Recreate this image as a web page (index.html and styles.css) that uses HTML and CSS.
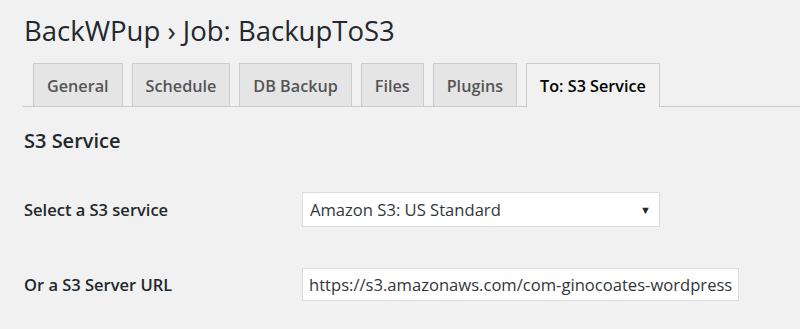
FILE: index.html
```html
<!DOCTYPE html>
<html lang="en">
<head>
  <meta charset="UTF-8">
  <title>BackWPup › Job: BackupToS3</title>
  <link rel="stylesheet" href="styles.css">
</head>
<body>
  <div class="wrap">
    <h1>BackWPup › Job: BackupToS3</h1>

    <nav class="nav-tabs">
      <a class="nav-tab" href="#">General</a>
      <a class="nav-tab" href="#">Schedule</a>
      <a class="nav-tab" href="#">DB Backup</a>
      <a class="nav-tab" href="#">Files</a>
      <a class="nav-tab" href="#">Plugins</a>
      <a class="nav-tab nav-tab-active" href="#">To: S3 Service</a>
    </nav>

    <h3 class="section-title">S3 Service</h3>

    <div class="form-table">
      <div class="form-row">
        <label class="form-label" for="s3region">Select a S3 service</label>
        <div class="select-box" id="s3region">
          <span>Amazon S3: US Standard</span>
          <span class="select-arrow">▼</span>
        </div>
      </div>
      <div class="form-row">
        <label class="form-label" for="s3base_url">Or a S3 Server URL</label>
        <input type="text" id="s3base_url" class="text-input" value="https://s3.amazonaws.com/com-ginocoates-wordpress">
      </div>
    </div>
  </div>
</body>
</html>
```

FILE: styles.css
```css
:root {
  --bg-color: #f1f1f1;
  --text-color: #23282d;
  --tab-bg: #e5e5e5;
  --tab-text: #555;
  --border-color: #ccc;
  --input-border: #ddd;
}

body {
  font-family: 'Open Sans', 'Noto Sans', sans-serif;
  background-color: var(--bg-color);
  color: var(--text-color);
  margin: 0;
}

.wrap {
  padding: 13px 0 0 23px;
}

h1 {
  font-size: 27.5px;
  font-weight: 400;
  line-height: 36px;
  margin: 0 0 14px 1px;
}

.nav-tabs {
  display: flex;
  padding-left: 10px;
  border-bottom: 1px solid var(--border-color);
}

.nav-tab {
  display: block;
  margin-right: 9px;
  padding: 0 13px;
  height: 42px;
  line-height: 44px;
  background-color: var(--tab-bg);
  border: 1px solid var(--border-color);
  border-bottom: none;
  color: var(--tab-text);
  font-size: 16.2px;
  font-weight: 600;
  text-decoration: none;
  margin-bottom: -1px;
}

.nav-tab-active {
  background-color: var(--bg-color);
  color: #000;
  height: 43px;
}

.section-title {
  font-size: 20px;
  font-weight: 600;
  margin: 20px 0 0 1px;
  line-height: 28px;
}

.form-table {
  margin-top: 37px;
}

.form-row {
  display: flex;
  align-items: center;
  margin-bottom: 41px;
}

.form-label {
  width: 278px;
  padding-left: 1px;
  font-size: 16.5px;
  font-weight: 600;
}

.select-box {
  display: flex;
  justify-content: space-between;
  align-items: center;
  box-sizing: border-box;
  width: 358px;
  height: 35px;
  padding: 0 8px 0 7px;
  background: #fff;
  border: 1px solid var(--input-border);
  font-size: 16.6px;
  color: #32373c;
}

.select-arrow {
  font-size: 11px;
  color: #23282d;
}

.text-input {
  box-sizing: border-box;
  width: 437px;
  height: 33px;
  padding: 0 6px;
  background: #fff;
  border: 1px solid var(--input-border);
  font-family: inherit;
  font-size: 16.6px;
  color: #32373c;
  outline: none;
}
```
